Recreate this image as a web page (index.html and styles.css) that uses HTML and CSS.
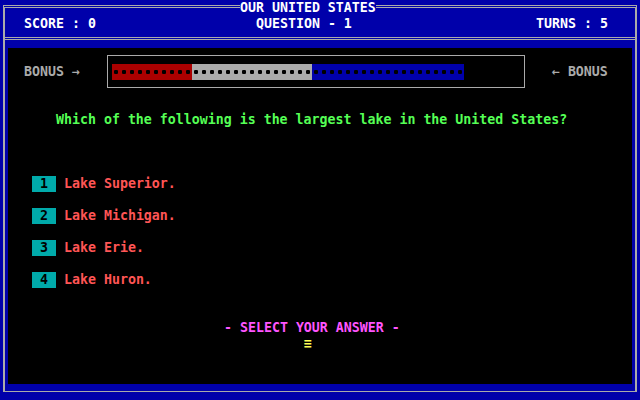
FILE: index.html
```html
<!DOCTYPE html>
<html>
<head>
<meta charset="utf-8">
<title>Our United States</title>
<link rel="stylesheet" href="styles.css">
</head>
<body>
<div class="screen">
  <div class="titlebar">
    <div class="rule rule-left"></div>
    <div class="title">OUR UNITED STATES</div>
    <div class="rule rule-right"></div>
  </div>
  <div class="frame">
    <div class="status">
      <span class="score">SCORE : 0</span>
      <span class="qnum">QUESTION - 1</span>
      <span class="turns">TURNS : 5</span>
    </div>
    <div class="sep"></div>
    <div class="play">
      <div class="bonus-row">
        <span class="bonus-label">BONUS →</span>
        <div class="meter">
          <div class="bar">
            <span class="seg red"></span>
            <span class="seg gray"></span>
            <span class="seg blue"></span>
          </div>
        </div>
        <span class="bonus-label right">← BONUS</span>
      </div>
      <p class="question">Which of the following is the largest lake in the United States?</p>
      <ol class="options">
        <li><span class="key">1</span><span class="answer">Lake Superior.</span></li>
        <li><span class="key">2</span><span class="answer">Lake Michigan.</span></li>
        <li><span class="key">3</span><span class="answer">Lake Erie.</span></li>
        <li><span class="key">4</span><span class="answer">Lake Huron.</span></li>
      </ol>
      <div class="prompt">- SELECT YOUR ANSWER -</div>
      <div class="cursor">≡</div>
    </div>
  </div>
</div>
</body>
</html>
```
FILE: styles.css
```css
* {
  margin: 0;
  padding: 0;
  box-sizing: border-box;
}

body {
  background: #0000aa;
  font-family: "DejaVu Sans Mono", "Liberation Mono", monospace;
  font-weight: bold;
  font-size: 13.28px;
  line-height: 16px;
}

.screen {
  width: 640px;
  height: 400px;
  background: #0000aa;
  padding: 0 3px;
  overflow: hidden;
}

.titlebar {
  display: flex;
  height: 16px;
}

.rule {
  margin-top: 5px;
  height: 11px;
  border-top: 3px double #aaaaaa;
}

.rule-left {
  width: 237px;
  border-left: 2px solid #aaaaaa;
}

.rule-right {
  flex: 1;
  border-right: 2px solid #aaaaaa;
}

.title {
  width: 136px;
  height: 16px;
  color: #ffffff;
  white-space: nowrap;
}

.frame {
  border-left: 2px solid #aaaaaa;
  border-right: 2px solid #aaaaaa;
  border-bottom: 1px solid #aaaaaa;
  padding-bottom: 7px;
}

.status {
  display: flex;
  height: 16px;
  padding-left: 19px;
  color: #ffffff;
  white-space: nowrap;
}

.score {
  width: 232px;
}

.qnum {
  width: 280px;
}

.sep {
  margin: 5px -2px 0;
  height: 11px;
  border-top: 3px double #aaaaaa;
}

.play {
  background: #000000;
  margin: 0 3px;
  height: 336px;
  padding-top: 7px;
  white-space: nowrap;
}

.bonus-row {
  display: flex;
  align-items: flex-start;
  height: 33px;
  color: #aaaaaa;
}

.bonus-label {
  margin-top: 9px;
  margin-left: 16px;
  height: 16px;
}

.bonus-label.right {
  margin-left: 27px;
}

.meter {
  margin-left: 27px;
  width: 418px;
  height: 33px;
  border: 1px solid #aaaaaa;
  padding: 8px 0 0 4px;
}

.bar {
  display: flex;
  height: 16px;
}

.seg {
  height: 16px;
  background-image: radial-gradient(circle at 4px 8px, #000 2px, transparent 2.4px);
  background-size: 8px 16px;
}

.seg.red {
  width: 80px;
  background-color: #aa0000;
}

.seg.gray {
  width: 120px;
  background-color: #aaaaaa;
}

.seg.blue {
  width: 152px;
  background-color: #0000aa;
}

.question {
  margin-top: 24px;
  padding-left: 48px;
  height: 16px;
  color: #55ff55;
}

.options {
  list-style: none;
  margin-top: 48px;
  padding-left: 24px;
  display: flex;
  flex-direction: column;
  gap: 16px;
}

.options li {
  display: flex;
  gap: 8px;
  height: 16px;
}

.key {
  width: 24px;
  background: #00aaaa;
  color: #000000;
  text-align: center;
}

.answer {
  color: #ff5555;
}

.prompt {
  margin-top: 32px;
  padding-left: 216px;
  height: 16px;
  color: #ff55ff;
}

.cursor {
  padding-left: 296px;
  height: 16px;
  color: #ffff55;
}
```
